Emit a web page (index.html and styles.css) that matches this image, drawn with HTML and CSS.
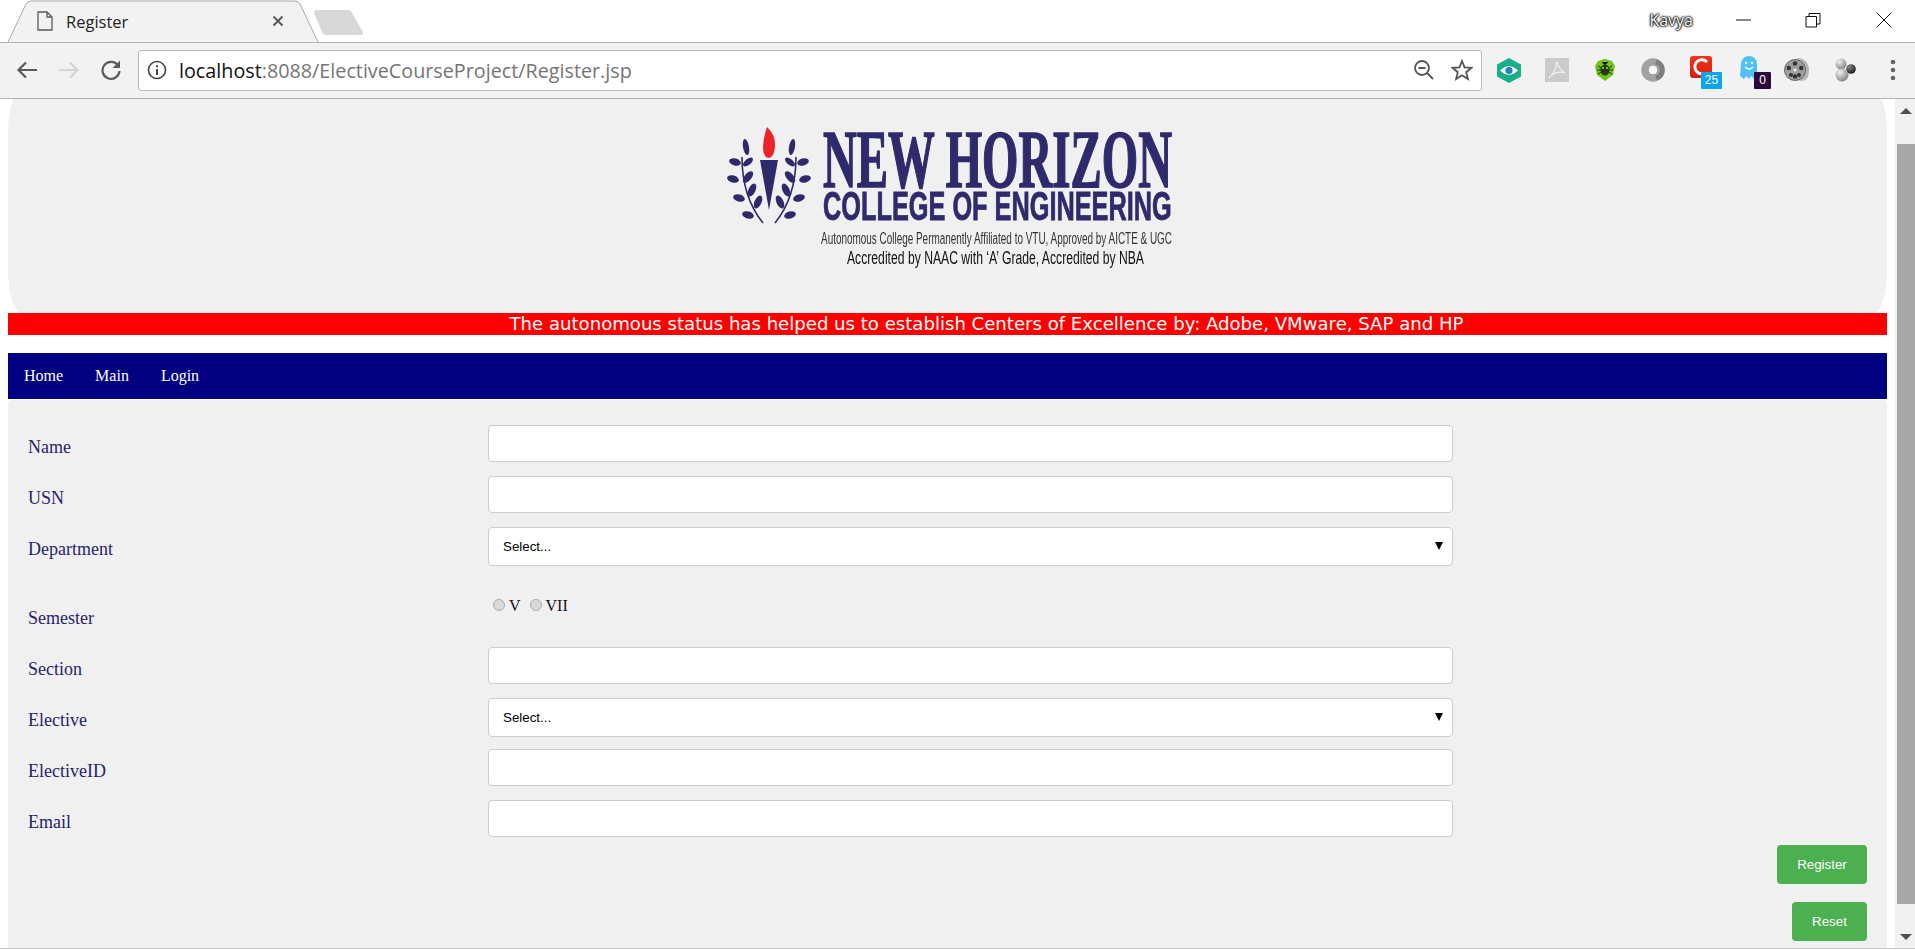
FILE: index.html
```html
<!DOCTYPE html>
<html lang="en">
<head>
    <meta charset="UTF-8">
    <meta name="viewport" content="width=device-width, initial-scale=1.0">
    <title>Register</title>
    <link rel="stylesheet" href="styles.css">
</head>
<body>
    <!-- browser window chrome -->
    <div class="tabstrip">
        <div class="tab">
            <svg class="tab-shape" width="312" height="43" viewBox="0 0 312 43">
                <path d="M0 42 L18 4 Q19.500 1 23 1 L287 1 Q290.500 1 292 4 L310 42" fill="#f2f2f2" stroke="#a9a9a9"/>
            </svg>
            <svg class="tab-icon" width="16" height="20" viewBox="0 0 16 20">
                <path d="M1 1 H10 L15 6 V19 H1 Z M10 1 V6 H15" fill="none" stroke="#5a5a5a" stroke-width="1.300"/>
            </svg>
            <span class="tab-title">Register</span>
            <svg class="tab-close" width="12" height="12" viewBox="0 0 12 12">
                <path d="M1.500 1.500 L10.500 10.500 M10.500 1.500 L1.500 10.500" stroke="#555" stroke-width="1.800"/>
            </svg>
        </div>
        <svg class="new-tab" width="50" height="26" viewBox="0 0 50 26">
            <path d="M2 0 H34 Q37 0 38 3 L49 22 Q50 25 47 25 H12 Q9 25 8 22 L0 3 Q0 0 2 0 Z" fill="#d8d8d8"/>
        </svg>
        <span class="win-user">Kavya</span>
        <div class="win-controls">
            <svg width="16" height="16" viewBox="0 0 16 16"><path d="M0 8 H15" stroke="#111" stroke-width="1"/></svg>
            <svg width="16" height="16" viewBox="0 0 16 16"><path d="M1 4.500 H11.500 V15 H1 Z M4 4.500 V1.500 H15 V12 H11.500" fill="none" stroke="#111" stroke-width="1"/></svg>
            <svg class="win-close" width="16" height="16" viewBox="0 0 16 16"><path d="M.5 .5 L15.500 15.500 M15.500 .5 L.5 15.500" stroke="#111" stroke-width="1"/></svg>
        </div>
    </div>

    <div class="toolbar">
        <div class="nav-btn">
            <svg width="22" height="20" viewBox="0 0 22 20"><path d="M21 10 H3 M10 2.500 L2.500 10 L10 17.500" fill="none" stroke="#5a5a5a" stroke-width="2.200"/></svg>
        </div>
        <div class="nav-btn">
            <svg width="22" height="20" viewBox="0 0 22 20"><path d="M1 10 H19 M12 2.500 L19.500 10 L12 17.500" fill="none" stroke="#d4d4d4" stroke-width="2.200"/></svg>
        </div>
        <div class="nav-btn">
            <svg width="22" height="22" viewBox="0 0 22 22">
                <path d="M18 6.500 A8.500 8.500 0 1 0 19.500 12" fill="none" stroke="#5a5a5a" stroke-width="2.200"/>
                <path d="M20 1.500 V9 H12.500 Z" fill="#5a5a5a"/>
            </svg>
        </div>
        <div class="omnibox">
            <svg class="omni-info" width="20" height="20" viewBox="0 0 20 20">
                <circle cx="10" cy="10" r="8.500" fill="none" stroke="#444" stroke-width="1.600"/>
                <path d="M10 9 V15 M10 5.200 V7.200" stroke="#444" stroke-width="2"/>
            </svg>
            <span class="omni-url"><span class="omni-host">localhost</span>:8088/ElectiveCourseProject/Register.jsp</span>
            <svg class="omni-action" width="22" height="22" viewBox="0 0 22 22">
                <circle cx="9" cy="9" r="7" fill="none" stroke="#555" stroke-width="1.800"/>
                <path d="M5.500 9 H12.500 M14 14 L20 20" stroke="#555" stroke-width="1.800"/>
            </svg>
            <svg class="omni-action" width="22" height="22" viewBox="0 0 22 22">
                <path d="M11 2 L13.600 8.300 L20.500 8.800 L15.200 13.200 L16.900 20 L11 16.300 L5.100 20 L6.800 13.200 L1.500 8.800 L8.400 8.300 Z" fill="none" stroke="#555" stroke-width="1.800"/>
            </svg>
        </div>
        <div class="ext-row">
            <div class="ext">
                <svg width="24" height="25" viewBox="0 0 24 25">
                    <path d="M12 0 L24 6.500 V18.500 L12 25 L0 18.500 V6.500 Z" fill="#17b08a"/>
                    <path d="M3 12.500 Q12 4 21 12.500 Q12 21 3 12.500 Z" fill="#fff"/>
                    <circle cx="12" cy="12.500" r="3.600" fill="#1d86b8"/>
                </svg>
            </div>
            <div class="ext">
                <svg width="24" height="24" viewBox="0 0 24 24">
                    <rect width="24" height="24" fill="#cbcbcb"/>
                    <path d="M4 20 Q9 16 11 8 Q11.500 3 12.500 5 Q13 10 20 15 Q14 13 8 16 Q5 19 4 20" fill="none" stroke="#f1f1f1" stroke-width="1.200"/>
                </svg>
            </div>
            <div class="ext">
                <svg width="20" height="22" viewBox="0 0 20 22">
                    <path d="M3 2 L10 0 L17 2 L20 7 L18 16 L10 22 L2 16 L0 7 Z" fill="#72c41e"/>
                    <ellipse cx="10" cy="11" rx="4.500" ry="5.500" fill="#2c3a0c"/>
                    <path d="M3 7 L17 15 M17 7 L3 15 M2 11 H18 M7 3 L10 6 L13 3" stroke="#26330a" stroke-width="1"/>
                    <circle cx="8" cy="9" r="1" fill="#a5e04a"/><circle cx="12" cy="9" r="1" fill="#a5e04a"/>
                </svg>
            </div>
            <div class="ext">
                <svg width="24" height="24" viewBox="0 0 24 24">
                    <circle cx="12" cy="12" r="8" fill="none" stroke="#a2a2a2" stroke-width="7.500"/>
                    <path d="M15 3.800 A8.500 8.500 0 0 1 15 20.200" fill="none" stroke="#808080" stroke-width="5"/>
                    <circle cx="12" cy="12" r="4" fill="#f7f7f7"/>
                </svg>
            </div>
            <div class="ext">
                <svg class="ext-shift" width="22" height="22" viewBox="0 0 22 22">
                    <defs>
                        <linearGradient id="redC" x1="0" y1="0" x2="0" y2="1"><stop offset="0" stop-color="#f4311f"/><stop offset="1" stop-color="#d4200f"/></linearGradient>
                    </defs>
                    <rect width="22" height="22" rx="3" fill="url(#redC)"/>
                    <path d="M17 6 A7 7 0 1 0 15 17" fill="none" stroke="#fff" stroke-width="3"/>
                </svg>
                <span class="badge badge-blue">25</span>
            </div>
            <div class="ext">
                <svg class="ext-shift" width="18" height="24" viewBox="0 0 18 24">
                    <path d="M1 9 A8 8 0 0 1 17 9 V20 L14 24 L11.500 21 L9 24 L6.500 21 L4 24 L0 21 Z" fill="#4fc0f8"/>
                    <circle cx="6" cy="8" r="1.200" fill="#fff"/><circle cx="12" cy="8" r="1.200" fill="#fff"/>
                    <path d="M5 12 Q9 16 13 12" fill="none" stroke="#fff" stroke-width="1.200"/>
                </svg>
                <span class="badge badge-dark">0</span>
            </div>
            <div class="ext">
                <svg width="26" height="26" viewBox="0 0 26 26">
                    <path d="M13 1 Q24 1 25 13 Q25 24 18 24 L8 22 Z" fill="#b5b5b5"/>
                    <circle cx="11" cy="13" r="10.500" fill="#9e9e9e" stroke="#666"/>
                    <circle cx="11" cy="6.500" r="2.200" fill="#333"/><circle cx="11" cy="19.500" r="2.200" fill="#333"/>
                    <circle cx="4.800" cy="11" r="2.200" fill="#333"/><circle cx="17.200" cy="11" r="2.200" fill="#333"/>
                    <circle cx="7" cy="18" r="2" fill="#333"/><circle cx="15" cy="18" r="2" fill="#333"/>
                    <circle cx="11" cy="13" r="1.500" fill="#eee"/>
                </svg>
            </div>
            <div class="ext">
                <svg width="22" height="24" viewBox="0 0 22 24">
                    <defs>
                        <radialGradient id="ball" cx=".35" cy=".3" r=".8"><stop offset="0" stop-color="#f2f2f2"/><stop offset="1" stop-color="#777"/></radialGradient>
                        <radialGradient id="ballDark" cx=".35" cy=".3" r=".8"><stop offset="0" stop-color="#888"/><stop offset="1" stop-color="#111"/></radialGradient>
                    </defs>
                    <circle cx="7" cy="6" r="5.500" fill="url(#ball)"/>
                    <circle cx="17" cy="11" r="4.800" fill="url(#ballDark)"/>
                    <circle cx="8" cy="17" r="6.500" fill="url(#ball)"/>
                </svg>
            </div>
            <div class="ext ext-menu">
                <svg width="6" height="22" viewBox="0 0 6 22">
                    <circle cx="3" cy="3" r="2.300" fill="#666"/><circle cx="3" cy="11" r="2.300" fill="#666"/><circle cx="3" cy="19" r="2.300" fill="#666"/>
                </svg>
            </div>
        </div>
    </div>

    <!-- page viewport -->
    <div class="viewport">
        <div class="page">
            <div class="header">
                <svg class="logo" width="444" height="141" viewBox="0 0 444 141">
                    <defs>
                        <g id="branch">
                            <path d="M35 96 Q14 70 14 30" fill="none" stroke="#2e2a6c" stroke-width="1.600"/>
                            <ellipse cx="18" cy="20" rx="3" ry="8" transform="rotate(-10 18 20)"/>
                            <ellipse cx="20" cy="35" rx="3" ry="6" transform="rotate(50 20 35)"/>
                            <ellipse cx="7" cy="35" rx="6" ry="3.500" transform="rotate(15 7 35)"/>
                            <ellipse cx="20" cy="50" rx="3.500" ry="7" transform="rotate(40 20 50)"/>
                            <ellipse cx="5" cy="52" rx="6" ry="3.500" transform="rotate(15 5 52)"/>
                            <ellipse cx="24" cy="63" rx="3.500" ry="7" transform="rotate(25 24 63)"/>
                            <ellipse cx="11" cy="71" rx="6" ry="3.500" transform="rotate(15 11 71)"/>
                            <ellipse cx="30" cy="75" rx="3.500" ry="7" transform="rotate(25 30 75)"/>
                            <ellipse cx="20" cy="88" rx="6" ry="3.500" transform="rotate(15 20 88)"/>
                        </g>
                    </defs>
                    <path d="M39 0 Q48 8 47 20 Q46 30 41 31 Q36 31 35 22 Q35 12 39 0 Z" fill="#ec2327"/>
                    <path d="M32 33 H50 L41 83 Z" fill="#2e2a6c"/>
                    <use href="#branch" fill="#2e2a6c"/>
                    <use href="#branch" fill="#2e2a6c" transform="translate(82 0) scale(-1 1)"/>
                    <text class="logo-new" transform="translate(95 60) scale(.574 1)" textLength="608" lengthAdjust="spacingAndGlyphs">NEW HORIZON</text>
                    <text class="logo-college" transform="translate(95 93) scale(.633 1)" textLength="551" lengthAdjust="spacingAndGlyphs">COLLEGE OF ENGINEERING</text>
                    <text class="logo-small" transform="translate(93 117) scale(.65 1)" textLength="540" lengthAdjust="spacingAndGlyphs">Autonomous College Permanently Affiliated to VTU, Approved by AICTE &amp; UGC</text>
                    <text class="logo-accr" transform="translate(119 137) scale(.66 1)" textLength="450" lengthAdjust="spacingAndGlyphs">Accredited by NAAC with ‘A’ Grade, Accredited by NBA</text>
                </svg>
            </div>
            <div class="banner">The autonomous status has helped us to establish Centers of Excellence by: Adobe, VMware, SAP and HP</div>
            <div class="navbar">
                <a href="#">Home</a>
                <a href="#">Main</a>
                <a href="#">Login</a>
            </div>
            <form class="reg-form">
                <div class="row">
                    <label for="name">Name</label>
                    <input type="text" id="name">
                </div>
                <div class="row">
                    <label for="usn">USN</label>
                    <input type="text" id="usn">
                </div>
                <div class="row">
                    <label for="dept">Department</label>
                    <div class="select-wrap">
                        <select id="dept"><option>Select...</option></select>
                    </div>
                </div>
                <div class="row row-radio">
                    <label>Semester</label>
                    <div class="radios">
                        <input type="radio" name="sem" id="sem5"><span>V</span>
                        <input type="radio" name="sem" id="sem7"><span>VII</span>
                    </div>
                </div>
                <div class="row">
                    <label for="section">Section</label>
                    <input type="text" id="section">
                </div>
                <div class="row">
                    <label for="elective">Elective</label>
                    <div class="select-wrap">
                        <select id="elective"><option>Select...</option></select>
                    </div>
                </div>
                <div class="row">
                    <label for="electiveid">ElectiveID</label>
                    <input type="text" id="electiveid">
                </div>
                <div class="row row-last">
                    <label for="email">Email</label>
                    <input type="text" id="email">
                </div>
                <div class="actions">
                    <button type="submit" class="btn btn-register">Register</button>
                    <button type="reset" class="btn btn-reset">Reset</button>
                </div>
            </form>
        </div>
        <div class="scrollbar">
            <div class="scroll-up"></div>
            <div class="scroll-thumb"></div>
            <div class="scroll-down"></div>
        </div>
    </div>
    <div class="win-bottom"></div>
</body>
</html>
```

FILE: styles.css
```css
html, body {
    height: 100%;
}
body {
    margin: 0;
    overflow: hidden;
    background: #fff;
    font-family: "Liberation Serif", serif;
    display: flex;
    flex-direction: column;
}

/* window chrome */
.tabstrip {
    height: 42px;
    flex: none;
    display: flex;
    align-items: flex-start;
    background: #fff;
    border-bottom: 1px solid #b4b4b4;
    box-sizing: content-box;
}
.tab {
    position: relative;
    width: 312px;
    height: 42px;
    margin-left: 8px;
    flex: none;
    display: flex;
    align-items: center;
}
.tab-shape {
    position: absolute;
    left: 0;
    top: 0;
}
.tab-icon {
    position: relative;
    margin-left: 29px;
}
.tab-title {
    position: relative;
    margin-left: 13px;
    font-family: "Open Sans", sans-serif;
    font-size: 16.500px;
    color: #222;
    width: 206px;
}
.tab-close {
    position: relative;
}
.new-tab {
    flex: none;
    margin: 10px 0 0 -6px;
}
.win-user {
    margin: 9px 0 0 auto;
    font-family: "Open Sans", sans-serif;
    font-size: 16px;
    color: #fff;
    text-shadow: 0 0 3px #000, 0 0 2px #000, 0 0 2px #000, 0 0 1px #000;
}
.win-controls {
    display: flex;
    gap: 53px;
    margin: 12px 23px 0 43px;
}
.win-close {
    margin-left: 2px;
}

.toolbar {
    height: 54px;
    flex: none;
    display: flex;
    align-items: center;
    padding: 0 0 1px 6px;
    background: #f2f2f2;
    border-bottom: 1px solid #b4b4b4;
}
.nav-btn {
    width: 42px;
    display: flex;
    justify-content: center;
    flex: none;
}
.omnibox {
    width: 1344px;
    height: 41px;
    margin-left: 6px;
    flex: none;
    box-sizing: border-box;
    display: flex;
    align-items: center;
    background: #fff;
    border: 1px solid #b9b9b9;
    border-radius: 3px;
    padding: 0 8px 0 8px;
}
.omni-info {
    flex: none;
}
.omni-url {
    margin-left: 12px;
    font-family: "Open Sans", sans-serif;
    font-size: 19.750px;
    color: #757575;
    flex: 1;
}
.omni-host {
    color: #111;
}
.omni-action {
    margin-left: 16px;
    flex: none;
}
.ext-row {
    display: flex;
    margin-left: 3px;
}
.ext {
    position: relative;
    width: 48px;
    height: 30px;
    flex: none;
    display: flex;
    align-items: center;
    justify-content: center;
}
.ext-menu {
    width: 44px;
    justify-content: flex-start;
    padding-left: 21px;
    box-sizing: border-box;
}
.ext-shift {
    margin-top: -6px;
}
.badge {
    position: absolute;
    top: 17px;
    height: 17px;
    line-height: 17px;
    text-align: center;
    font-family: "Liberation Sans", sans-serif;
    font-size: 12px;
    color: #fff;
    border-radius: 1px;
}
.badge-blue {
    left: 24px;
    width: 21px;
    background: #0ea5f0;
}
.badge-dark {
    left: 29px;
    width: 17px;
    background: #2d0a3a;
}

/* page */
.viewport {
    flex: 1;
    min-height: 0;
    display: flex;
    overflow: hidden;
}
.page {
    width: 1879px;
    margin-left: 8px;
    flex: none;
}
.header {
    height: 223px;
    margin-top: -9px;
    padding: 37px 0 0 5px;
    box-sizing: border-box;
    text-align: center;
    background: #f0f0f0;
    border-radius: 14px / 43px;
}
.logo {
    display: inline-block;
    overflow: visible;
    filter: blur(0.4px);
}
.logo text {
    fill: #2e2a6c;
}
.logo .logo-new {
    font-family: "Liberation Serif", serif;
    font-weight: bold;
    font-size: 82px;
    stroke: #2e2a6c;
    stroke-width: 1.600px;
}
.logo .logo-college {
    font-family: "Liberation Sans", sans-serif;
    font-weight: bold;
    font-size: 40px;
    stroke: #2e2a6c;
    stroke-width: 0.800px;
}
.logo .logo-small {
    font-family: "Liberation Sans", sans-serif;
    font-size: 17px;
    fill: #333;
}
.logo .logo-accr {
    font-family: "Liberation Sans", sans-serif;
    font-size: 19px;
    fill: #111;
}
.banner {
    height: 22px;
    line-height: 22px;
    padding-left: 78px;
    text-align: center;
    background: #f00;
    color: #fff;
    font-family: "DejaVu Sans", sans-serif;
    font-size: 18.100px;
}
.navbar {
    height: 46px;
    margin-top: 18px;
    display: flex;
    align-items: center;
    gap: 32px;
    padding-left: 16px;
    background: #000080;
}
.navbar a {
    color: #fff;
    text-decoration: none;
    font-size: 16px;
}

/* form */
.reg-form {
    margin-top: 1px;
    height: 549px;
    padding: 25px 20px 0 20px;
    box-sizing: border-box;
    background: #f0f0f0;
    border-radius: 4px;
}
.row {
    display: flex;
    height: 51px;
}
.row-radio {
    height: 69px;
}
.row-last {
    height: 45px;
}
.row label {
    width: 460px;
    flex: none;
    padding-top: 12px;
    font-size: 18px;
    line-height: 21px;
    color: #25256a;
}
.row-radio label {
    padding-top: 30px;
}
.row input[type="text"] {
    width: 965px;
    height: 37px;
    box-sizing: border-box;
    border: 1px solid #ccc;
    border-radius: 4px;
    background: #fff;
}
.select-wrap {
    position: relative;
    width: 965px;
    height: 39px;
}
.select-wrap select {
    width: 100%;
    height: 100%;
    padding: 0 14px;
    appearance: none;
    border: 1px solid #ccc;
    border-radius: 4px;
    background: #fff;
    color: #000;
    font-family: "Liberation Sans", sans-serif;
    font-size: 13.333px;
}
.select-wrap::after {
    content: "";
    position: absolute;
    right: 10px;
    top: 15px;
    border-left: 4px solid transparent;
    border-right: 4px solid transparent;
    border-top: 8px solid #000;
}
.radios {
    display: flex;
    align-items: center;
    height: 18px;
    padding-top: 19px;
    font-size: 16px;
    color: #111;
}
.radios input {
    appearance: none;
    width: 12px;
    height: 12px;
    margin: -2px 4px 0 5px;
    border: 1px solid #a9a9a9;
    border-radius: 50%;
    background: #d9d9d9;
}
.radios input + span + input {
    margin-left: 9px;
}
.actions {
    display: flex;
    flex-direction: column;
    align-items: flex-end;
    gap: 18px;
}
.btn {
    height: 39px;
    border: none;
    border-radius: 4px;
    background: #4caf50;
    color: #fff;
    font-family: "Liberation Sans", sans-serif;
    font-size: 13.333px;
    cursor: pointer;
}
.btn-register {
    width: 90px;
}
.btn-reset {
    width: 75px;
}

/* fake scrollbar, page is scrolled a little */
.scrollbar {
    width: 20px;
    margin-left: 8px;
    flex: none;
    display: flex;
    flex-direction: column;
    background: #f1f1f1;
}
.scroll-up {
    height: 45px;
    flex: none;
    position: relative;
}
.scroll-up::after {
    content: "";
    position: absolute;
    left: 5px;
    top: 9px;
    border-left: 6px solid transparent;
    border-right: 6px solid transparent;
    border-bottom: 6px solid #505050;
}
.scroll-thumb {
    height: 760px;
    margin-left: 2px;
    flex: none;
    background: #a8a8a8;
}
.scroll-down {
    flex: 1;
    position: relative;
}
.scroll-down::after {
    content: "";
    position: absolute;
    left: 5px;
    top: 30px;
    border-left: 6px solid transparent;
    border-right: 6px solid transparent;
    border-top: 6px solid #505050;
}
.win-bottom {
    height: 2px;
    flex: none;
    background: #fff;
    border-top: 1px solid #ccc;
    box-sizing: border-box;
}
```
